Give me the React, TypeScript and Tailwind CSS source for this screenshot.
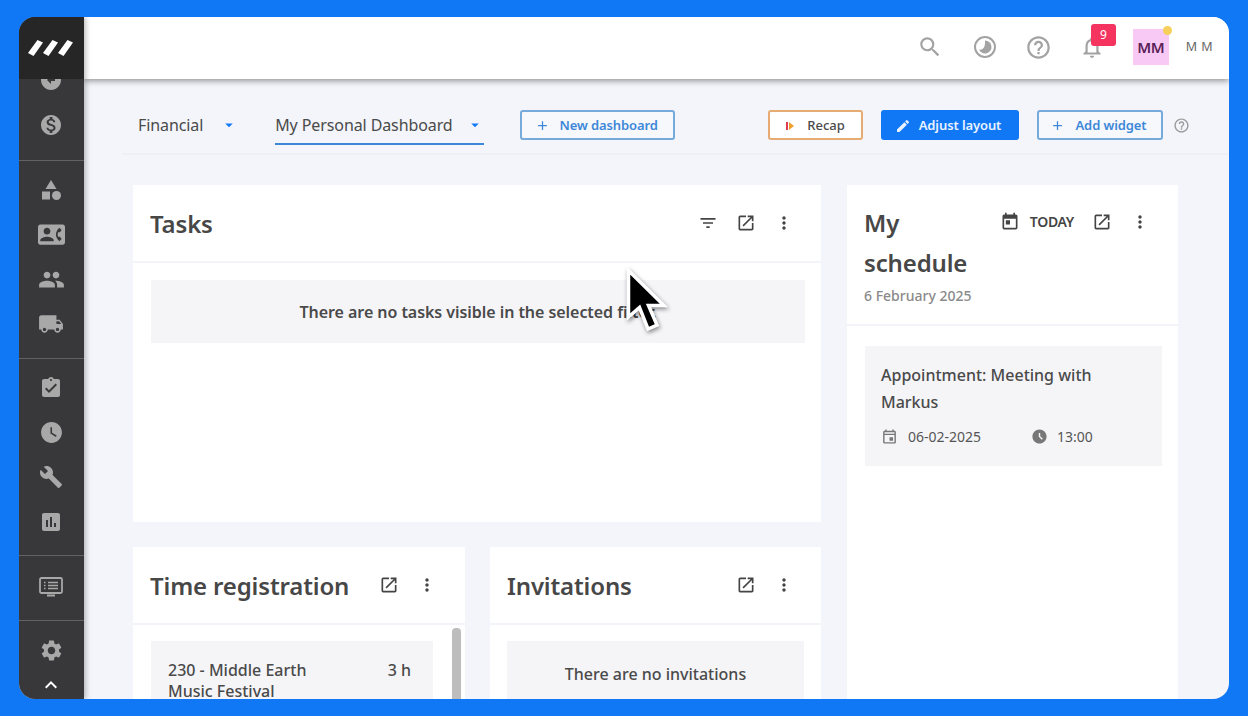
import React from "react";
import {
  MdAccessTimeFilled,
  MdAdd,
  MdArrowCircleLeft,
  MdArrowDropDown,
  MdAssessment,
  MdAssignmentTurnedIn,
  MdBuild,
  MdCategory,
  MdContactPhone,
  MdEdit,
  MdFilterList,
  MdHelpOutline,
  MdKeyboardArrowUp,
  MdLocalShipping,
  MdMonetizationOn,
  MdMoreVert,
  MdNotificationsNone,
  MdOpenInNew,
  MdOutlineEvent,
  MdPeople,
  MdSearch,
  MdSettings,
  MdToday,
  MdWatchLater,
} from "react-icons/md";

const Logo = () => (
  <svg width="45" height="18" viewBox="0 0 45 18" fill="#fff">
    <path d="M0 14 L9.500 1 L15 3.500 L5.500 17 Z" />
    <path d="M15 14 L24.500 1 L30 3.500 L20.500 17 Z" />
    <path d="M30 14 L39.500 1 L45 3.500 L35.500 17 Z" />
  </svg>
);

const Contrast = () => (
  <svg width="24" height="24" viewBox="0 0 24 24" fill="none">
    <circle cx="12" cy="12" r="10" stroke="#a3a3a3" strokeWidth="2" />
    <path
      d="M12 5.500 a6.500 6.500 0 1 1 -6 9 c3 .8 6.500 -1 6 -9 Z"
      fill="#a3a3a3"
    />
  </svg>
);

const ListMonitor = () => (
  <svg width="24" height="24" viewBox="0 0 24 24" fill="none" stroke="#a8a8a8">
    <rect x="1" y="3" width="22" height="15" rx="1.500" strokeWidth="1.800" />
    <path d="M8 20.500 H16" strokeWidth="2" />
    <path d="M9 7.500 H19 M9 10.500 H19 M9 13.500 H19" strokeWidth="1.500" />
    <path d="M5 7.500 H6.500 M5 10.500 H6.500 M5 13.500 H6.500" strokeWidth="1.500" />
  </svg>
);

const Cursor = () => (
  <svg
    width="42"
    height="66"
    viewBox="0 0 42 66"
    className="absolute left-[626px] top-[268px] drop-shadow-[1px_2px_2px_rgba(0,0,0,0.45)]"
  >
    <path
      d="M2.500 2.500 V49 L13.500 39.500 L22 61 L31 57 L22.500 37.500 L38 37.500 Z"
      fill="#000"
      stroke="#fff"
      strokeWidth="3.500"
    />
  </svg>
);

const NavDivider = () => <div className="h-px bg-[#626264]" />;

const NavIcon = ({ children }: { children: React.ReactNode }) => (
  <div className="flex h-[44.5px] items-center justify-center pr-px text-[#a8a8a8]">
    {children}
  </div>
);

const Sidebar = () => (
  <div className="relative z-20 flex w-[65px] shrink-0 flex-col bg-[#38383a] shadow-[2px_0_5px_rgba(0,0,0,0.25)]">
    <div className="z-10 flex h-[62px] shrink-0 items-center justify-center bg-[#262627] pr-[2px]">
      <Logo />
    </div>
    <div className="-mt-[21px] flex flex-col">
      <NavIcon>
        <MdArrowCircleLeft size={24} />
      </NavIcon>
      <NavIcon>
        <MdMonetizationOn size={24} />
      </NavIcon>
      <div className="h-[13px]" />
      <NavDivider />
      <div className="h-[7px]" />
      <NavIcon>
        <MdCategory size={24} />
      </NavIcon>
      <NavIcon>
        <MdContactPhone size={27} />
      </NavIcon>
      <NavIcon>
        <MdPeople size={27} />
      </NavIcon>
      <NavIcon>
        <MdLocalShipping size={26} />
      </NavIcon>
      <div className="h-[12px]" />
      <NavDivider />
      <div className="h-[7px]" />
      <NavIcon>
        <MdAssignmentTurnedIn size={24} />
      </NavIcon>
      <NavIcon>
        <MdWatchLater size={25} />
      </NavIcon>
      <NavIcon>
        <MdBuild size={24} />
      </NavIcon>
      <NavIcon>
        <MdAssessment size={24} />
      </NavIcon>
      <div className="h-[11px]" />
      <NavDivider />
      <div className="h-[9px]" />
      <NavIcon>
        <ListMonitor />
      </NavIcon>
      <div className="h-[10px]" />
      <NavDivider />
      <div className="h-[8px]" />
      <NavIcon>
        <MdSettings size={25} />
      </NavIcon>
      <div className="flex justify-center pr-px text-white">
        <MdKeyboardArrowUp size={24} />
      </div>
    </div>
  </div>
);

const Header = () => (
  <div className="relative z-10 flex h-[62px] shrink-0 items-center justify-end bg-white pb-[2px] pr-[16px] shadow-[0_2px_6px_rgba(0,0,0,0.4)]">
    <MdSearch size={26} className="text-[#a3a3a3]" />
    <div className="ml-[30px]">
      <Contrast />
    </div>
    <MdHelpOutline size={27} className="ml-[28px] text-[#a3a3a3]" />
    <div className="relative ml-[27px] flex">
      <MdNotificationsNone size={26} className="text-[#a3a3a3]" />
      <span className="absolute -top-[10px] left-[12px] flex h-[22px] w-[25px] items-center justify-center rounded-[3px] bg-[#f5355f] text-[12px] text-white">
        9
      </span>
    </div>
    <div className="relative ml-[28px] flex h-[36px] w-[36px] items-center justify-center bg-[#f9c9f5] text-[15px] font-semibold tracking-[-0.3px] text-[#5a2258]">
      MM
      <span className="absolute -right-[3px] -top-[3px] h-[9px] w-[9px] rounded-full bg-[#f7cf5b]" />
    </div>
    <span className="ml-[17px] text-[12.500px] tracking-[0.4px] text-[#666]">
      M M
    </span>
  </div>
);

const OutlineButton = ({
  label,
  width,
}: {
  label: string;
  width: string;
}) => (
  <button
    className={`flex h-[30px] items-center justify-center gap-[10px] rounded-[3px] border-2 border-[#76aadb] bg-[#f6f8fc] pr-[3px] pt-px text-[13px] font-semibold tracking-[-0.1px] text-[#3d87d8] ${width}`}
  >
    <MdAdd size={15} />
    {label}
  </button>
);

const Toolbar = () => (
  <div className="ml-[38px] flex h-[45px] items-start border-b-2 border-[#edf0f5] pl-[16px] pr-[39.500px]">
    <div className="flex h-[34.500px] items-center pb-[4px] text-[16px] tracking-[-0.1px] text-[#4a4a4a]">
      <span>Financial</span>
      <MdArrowDropDown size={18} className="ml-[17px] text-[#1178f5]" />
    </div>
    <div className="ml-[37px] flex h-[34.500px] w-[209px] items-center border-b-2 border-[#3d87d8] pb-[2px] text-[16px] tracking-[-0.1px] text-[#4a4a4a]">
      <span>My Personal Dashboard</span>
      <MdArrowDropDown size={18} className="ml-[13px] text-[#1178f5]" />
    </div>
    <div className="ml-[36px] flex">
      <OutlineButton label="New dashboard" width="w-[155px]" />
    </div>
    <button className="ml-auto flex h-[30px] w-[95px] items-center justify-center gap-[13px] rounded-[3px] border-2 border-[#e6ab72] bg-white pt-px text-[13px] font-medium text-[#4a4a4a]">
      <svg width="8" height="10" viewBox="0 0 8 10">
        <rect x="0" y="1" width="2" height="8" fill="#e23b4e" />
        <path d="M3 1 L8 5 L3 9 Z" fill="#f0a030" />
      </svg>
      Recap
    </button>
    <button className="ml-[18px] flex h-[30px] w-[138px] items-center justify-center gap-[8px] rounded-[3px] bg-[#1178f5] pr-[4px] pt-px text-[13px] font-semibold tracking-[-0.1px] text-[#e9f2ff]">
      <MdEdit size={16} />
      Adjust layout
    </button>
    <div className="ml-[18px] flex">
      <OutlineButton label="Add widget" width="w-[126px]" />
    </div>
    <div className="ml-[9.500px] flex h-[30px] items-center">
      <MdHelpOutline size={17} className="text-[#9a9a9a]" />
    </div>
  </div>
);

const CardActions = () => (
  <div className="flex items-center gap-[18px] text-[#444]">
    <MdOpenInNew size={20} />
    <MdMoreVert size={20} />
  </div>
);

const CardTitle = ({ children }: { children: React.ReactNode }) => (
  <h2 className="mt-px text-[24px] font-semibold tracking-[-0.15px] text-[#474747]">
    {children}
  </h2>
);

const App = () => {
  return (
    <div className="relative h-[716px] w-[1248px] overflow-hidden bg-[#1178f5] px-[19px] pb-[17px] pt-[17px] font-['Noto_Sans',sans-serif]">
      <div className="flex h-[682px] overflow-hidden rounded-[16px] bg-[#f3f5fa]">
        <Sidebar />
        <div className="flex min-w-0 flex-1 flex-col">
          <Header />
          <div className="pt-[31px]">
            <Toolbar />
          </div>
          <div className="flex gap-[26px] pl-[49px] pt-[30px]">
            <div className="flex w-[688px] shrink-0 flex-col gap-[25px]">
              <section className="h-[337px] bg-white">
                <div className="flex h-[78px] items-center justify-between border-b-2 border-[#f2f4f9] pl-[17px] pr-[27px]">
                  <CardTitle>Tasks</CardTitle>
                  <div className="flex items-center gap-[18px] text-[#444]">
                    <MdFilterList size={20} />
                    <MdOpenInNew size={20} />
                    <MdMoreVert size={20} />
                  </div>
                </div>
                <div className="pb-[17px] pl-[18px] pr-[16px] pt-[17px]">
                  <div className="flex h-[63px] items-center justify-center bg-[#f5f5f8] text-[16px] font-semibold tracking-[-0.05px] text-[#4a4a4a]">
                    There are no tasks visible in the selected filter.
                  </div>
                </div>
              </section>
              <div className="grid h-[200px] grid-cols-[332px_331px] gap-[25px]">
                <section className="relative bg-white">
                  <div className="flex h-[78px] items-center justify-between border-b-2 border-[#f2f4f9] pl-[17px] pr-[28px]">
                    <CardTitle>Time registration</CardTitle>
                    <CardActions />
                  </div>
                  <div className="ml-[18px] mr-[32px] mt-[16px] flex h-[80px] items-start justify-between bg-[#f5f5f8] pl-[17px] pr-[22px] pt-[19px] text-[16px] font-medium leading-[21px] text-[#4a4a4a]">
                    <span className="w-[170px]">
                      230 - Middle Earth Music Festival
                    </span>
                    <span>3 h</span>
                  </div>
                  <div className="absolute right-[4px] top-[81px] h-[100px] w-[9px] rounded-[4px] bg-[#bdbdbd]" />
                </section>
                <section className="bg-white">
                  <div className="flex h-[78px] items-center justify-between border-b-2 border-[#f2f4f9] pl-[17px] pr-[27px]">
                    <CardTitle>Invitations</CardTitle>
                    <CardActions />
                  </div>
                  <div className="mx-[17px] mt-[16px] flex h-[80px] items-start justify-center bg-[#f5f5f8] pt-[21px] text-[16px] font-medium text-[#4a4a4a]">
                    There are no invitations
                  </div>
                </section>
              </div>
            </div>
            <section className="h-[520px] w-[331px] shrink-0 bg-white">
              <div className="relative h-[141px] border-b-2 border-[#f2f4f9] pl-[17px] pt-[17px]">
                <div className="w-[110px]">
                  <CardTitle>
                    <span className="block leading-[40px]">My schedule</span>
                  </CardTitle>
                </div>
                <div className="mt-[2px] text-[14px] font-medium text-[#8a8a8a]">
                  6 February 2025
                </div>
                <div className="absolute right-[28px] top-[26px] flex items-center text-[#444]">
                  <MdToday size={20} />
                  <span className="ml-[10px] text-[14px] font-semibold tracking-[-0.3px]">
                    TODAY
                  </span>
                  <MdOpenInNew size={20} className="ml-[18px]" />
                  <MdMoreVert size={20} className="ml-[18px]" />
                </div>
              </div>
              <div className="ml-[18px] mr-[16px] mt-[20px] h-[120px] bg-[#f5f5f8] px-[16px] pt-[16px] text-[#4a4a4a]">
                <p className="text-[16px] font-medium leading-[27px]">
                  Appointment: Meeting with Markus
                </p>
                <div className="mt-[10px] flex items-center text-[14px] text-[#555]">
                  <MdOutlineEvent size={17} className="text-[#777]" />
                  <span className="ml-[10px] w-[123px]">06-02-2025</span>
                  <MdAccessTimeFilled size={17} className="text-[#777]" />
                  <span className="ml-[9px]">13:00</span>
                </div>
              </div>
            </section>
          </div>
        </div>
      </div>
      <Cursor />
    </div>
  );
};

export default App;
